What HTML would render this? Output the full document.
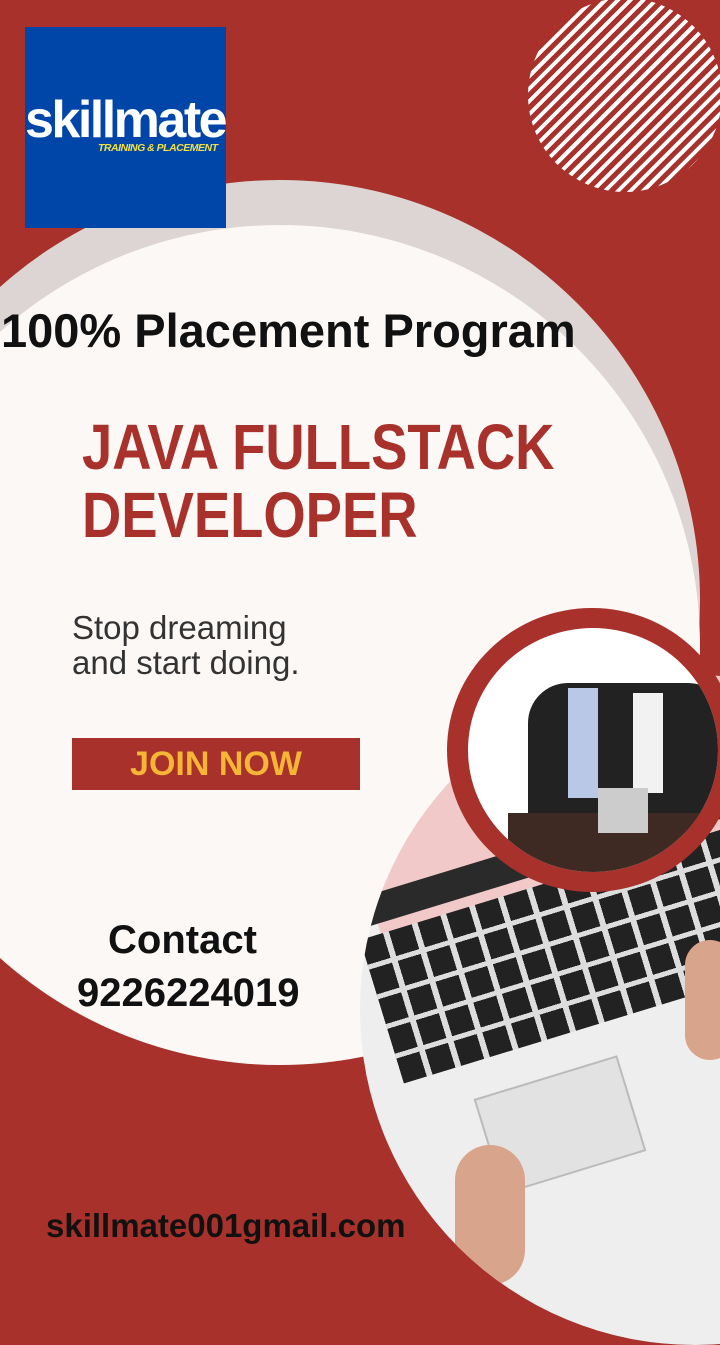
<!DOCTYPE html>
<html><head><meta charset="utf-8"><style>
*{margin:0;padding:0;box-sizing:border-box}
body{width:720px;height:1280px;overflow:hidden;background:#a8312b;position:relative;font-family:"Liberation Sans",sans-serif}
.a{position:absolute;white-space:nowrap}
.circ{position:absolute;border-radius:50%}
</style></head><body>
<div class="circ" style="left:-140px;top:180px;width:840px;height:840px;background:#ddd5d3"></div>
<div class="circ" style="left:-140px;top:225px;width:840px;height:840px;background:#fcf8f6"></div>
<div class="circ" style="left:528px;top:-2px;width:194px;height:194px;background:repeating-linear-gradient(135deg,#fff 0 4px,#a8312b 4px 9px)"></div>
<div class="a" style="left:25px;top:27px;width:201px;height:201px;background:#0046a8"></div>
<div class="a" style="left:25px;top:90px;color:#fff;font-weight:bold;font-size:52px;letter-spacing:-2.5px">skillmate</div>
<div class="a" style="left:98px;top:142px;color:#f0e040;font-weight:bold;font-style:italic;font-size:10.5px;letter-spacing:-0.5px">TRAINING &amp; PLACEMENT</div>
<div class="a" style="left:1px;top:303px;font-size:47px;font-weight:bold;color:#111">100% Placement Program</div>
<div class="a" style="left:82px;top:413px;font-size:64px;font-weight:bold;color:#a8312b;line-height:68px;transform:scaleX(0.85);transform-origin:left">JAVA FULLSTACK<br>DEVELOPER</div>
<div class="a" style="left:72px;top:610px;font-size:33px;color:#333;line-height:35px">Stop dreaming<br>and start doing.</div>
<div class="a" style="left:72px;top:738px;width:288px;height:52px;background:#a8312b;color:#f5b535;font-size:34px;font-weight:bold;text-align:center;line-height:52px">JOIN NOW</div>
<div class="a" style="left:108px;top:918px;font-size:40px;font-weight:bold;color:#111">Contact</div>
<div class="a" style="left:77px;top:971px;font-size:40px;font-weight:bold;color:#111">9226224019</div>
<div class="circ" style="left:360px;top:675px;width:670px;height:670px;background:#eee;overflow:hidden">
 <div class="a" style="left:-40px;top:60px;width:420px;height:220px;background:#f1c9c9;transform:rotate(-17deg);transform-origin:left top"></div>
 <div class="a" style="left:-40px;top:235px;width:460px;height:30px;background:#2a2a2a;transform:rotate(-17deg);transform-origin:left top"></div>
 <div class="a" style="left:0px;top:265px;width:430px;height:150px;background:repeating-linear-gradient(90deg,#222 0 24px,#ddd 24px 30px);transform:rotate(-17deg);transform-origin:left top"></div>
 <div class="a" style="left:0px;top:265px;width:430px;height:150px;background:repeating-linear-gradient(0deg,transparent 0 26px,#ddd 26px 31px);transform:rotate(-17deg);transform-origin:left top"></div>
 <div class="a" style="left:125px;top:400px;width:150px;height:100px;border:2px solid #bbb;background:#e2e2e2;transform:rotate(-17deg)"></div>
 <div class="a" style="left:95px;top:470px;width:70px;height:140px;background:#d8a48c;border-radius:35px"></div>
 <div class="a" style="left:325px;top:265px;width:50px;height:120px;background:#d8a48c;border-radius:25px"></div>
</div>
<div class="circ" style="left:447px;top:608px;width:290px;height:284px;background:#a8312b"></div>
<div class="circ" style="left:468px;top:628px;width:250px;height:244px;background:#fff;overflow:hidden">
 <div class="a" style="left:60px;top:55px;width:200px;height:150px;background:#222;border-radius:40px 40px 0 0"></div>
 <div class="a" style="left:100px;top:60px;width:30px;height:110px;background:#b9c8e6"></div>
 <div class="a" style="left:165px;top:65px;width:30px;height:100px;background:#f2f2f2"></div>
 <div class="a" style="left:40px;top:185px;width:240px;height:60px;background:#3e2a22"></div>
 <div class="a" style="left:130px;top:160px;width:50px;height:45px;background:#ccc"></div>
</div>
<div class="a" style="left:46px;top:1207px;font-size:33px;font-weight:bold;color:#111">skillmate001gmail.com</div>
</body></html>
